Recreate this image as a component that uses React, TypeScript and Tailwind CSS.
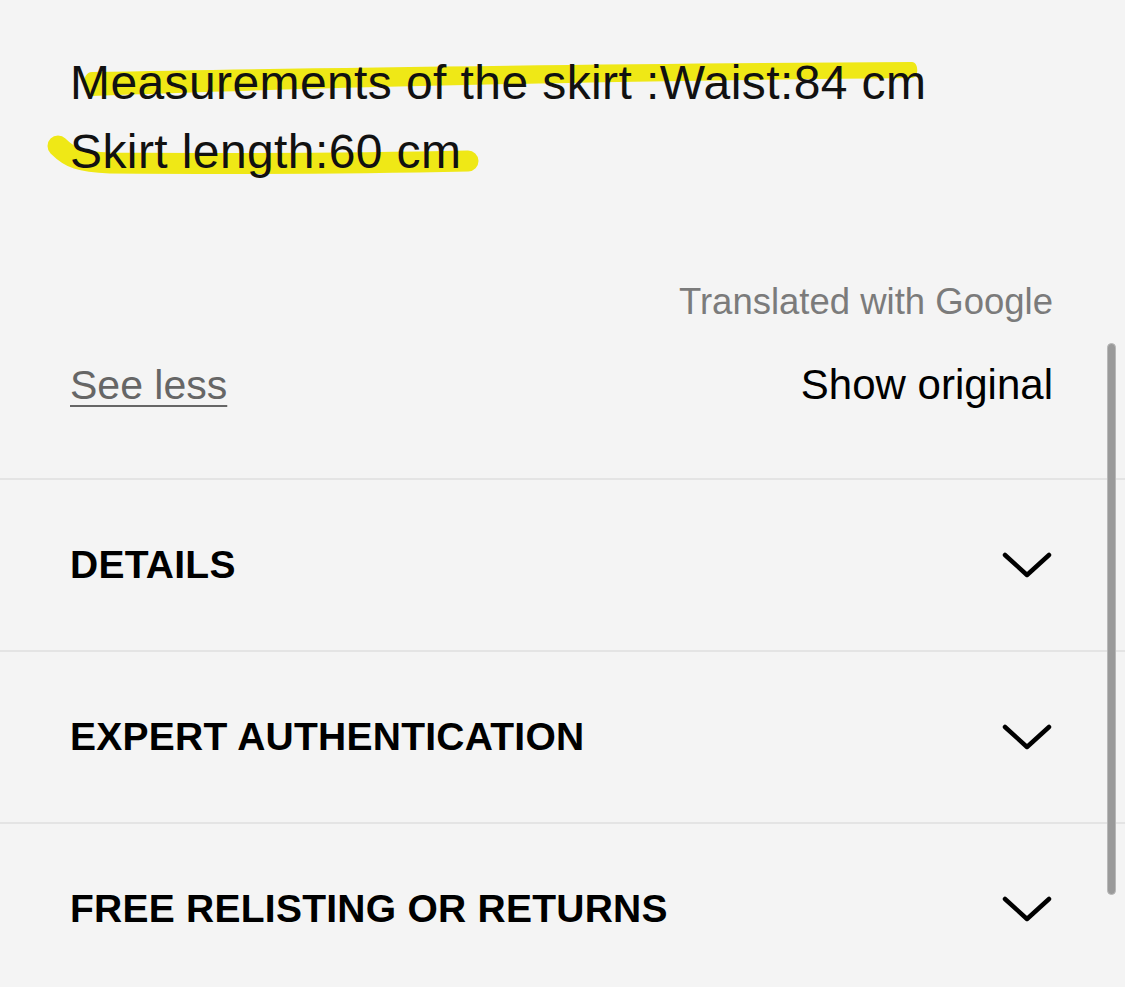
import React from "react";

const Chevron = () => (
  <svg width="52" height="28" viewBox="0 0 52 28" className="shrink-0">
    <path d="M4 4 L26 24 L48 4" fill="none" stroke="#000" strokeWidth="4.5" strokeLinecap="round" strokeLinejoin="round" />
  </svg>
);

const Row = ({ title }: { title: string }) => (
  <div className="flex h-[172px] items-center justify-between border-t-2 border-[#e4e4e4] pl-[70px] pr-[72px]">
    <span className="text-[39px] font-bold leading-[48px] tracking-[0.25px] text-black">{title}</span>
    <Chevron />
  </div>
);

export default function App() {
  return (
    <div
      className="relative h-[987px] w-[1125px] overflow-hidden bg-[#f4f4f4]"
      style={{ fontFamily: '"Liberation Sans", Arial, sans-serif' }}
    >
      <svg className="pointer-events-none absolute left-0 top-0" width="1125" height="200" viewBox="0 0 1125 200">
        <path
          d="M92 72 C 300 68, 600 64, 912 62 C 919 62, 919 78, 912 78 C 600 81, 300 88, 92 96 C 81 96, 81 72, 92 72 Z"
          fill="#efe816"
        />
        <path
          d="M58 146 C 70 158, 80 162, 110 163 C 250 164, 380 163, 468 161"
          fill="none"
          stroke="#efe816"
          strokeWidth="21"
          strokeLinecap="round"
        />
      </svg>

      <div className="relative px-[70px] pt-[48px]">
        <p className="text-[48px] leading-[69px] tracking-[0.4px] text-[#111]">
          Measurements of the skirt :Waist:84 cm
          <br />
          Skirt length:60 cm
        </p>
      </div>

      <div className="relative mt-[94px] flex flex-col pl-[70px] pr-[72px]">
        <div className="self-end text-[36.5px] leading-[44px] text-[#7b7b7b]">Translated with Google</div>
        <div className="mt-[37px] flex items-center justify-between">
          <span className="text-[41px] leading-[48px] text-[#666] underline decoration-2 underline-offset-[6px]">See less</span>
          <span className="text-[42px] leading-[48px] text-black">Show original</span>
        </div>
      </div>

      <div className="mt-[69px]">
        <Row title="DETAILS" />
        <Row title="EXPERT AUTHENTICATION" />
        <Row title="FREE RELISTING OR RETURNS" />
      </div>

      <div className="absolute left-[1107px] top-[343px] h-[552px] w-[9px] rounded-full border border-[#b8b8b8] bg-[#9a9a9a]" />
    </div>
  );
}
